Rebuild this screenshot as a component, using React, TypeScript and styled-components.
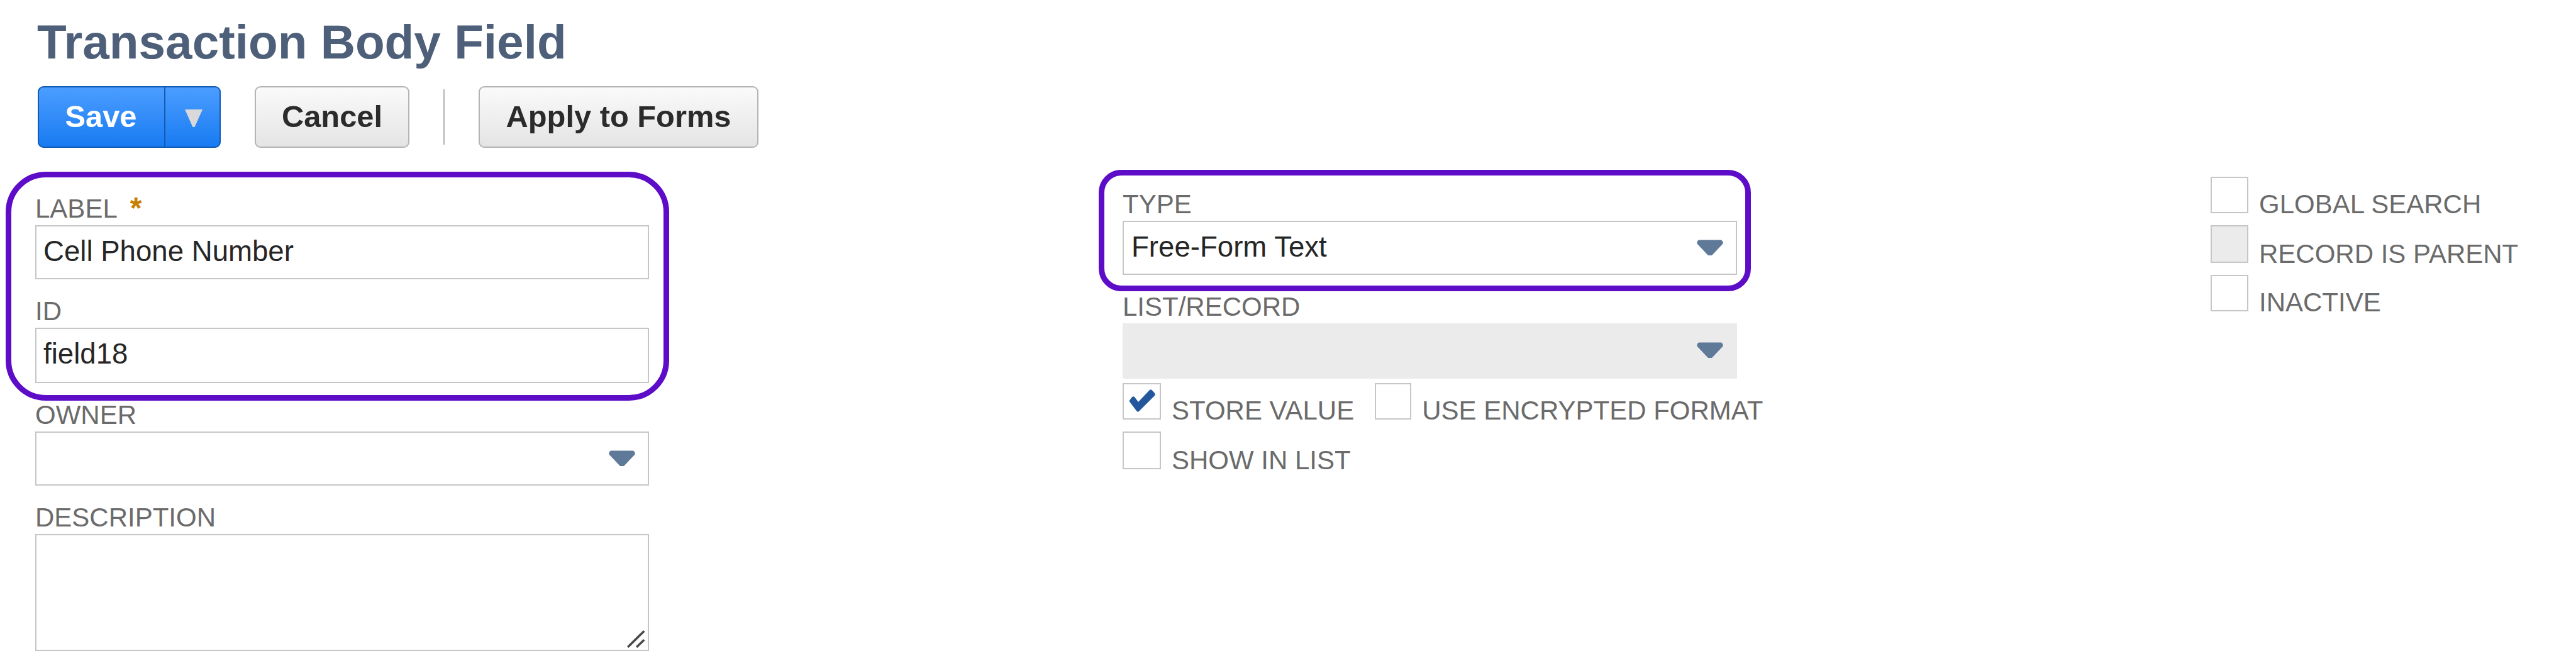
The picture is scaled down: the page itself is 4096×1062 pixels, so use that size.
import React from 'react';
import styled, { createGlobalStyle } from 'styled-components';

interface SelectFieldProps {
  label: string;
  value?: string;
  disabled?: boolean;
}

interface CheckFieldProps {
  label: string;
  checked?: boolean;
  disabled?: boolean;
  width?: number;
  height?: number;
}

const CaretIcon: React.FC = () => (
  <Caret width="42" height="26" viewBox="0 0 42 26">
    <path d="M3 0.5H39L41.5 3V6.5L24 25H18L0.5 6.5V3Z" fill="#5f7999" />
  </Caret>
);

const SelectField: React.FC<SelectFieldProps> = ({ label, value, disabled }) => (
  <Field>
    <Label>{label}</Label>
    <Select $disabled={disabled}>
      <Value>{value}</Value>
      <CaretIcon />
    </Select>
  </Field>
);

const CheckField: React.FC<CheckFieldProps> = ({ label, checked, disabled, width = 60, height = 58 }) => (
  <CheckRow>
    <CheckBox $width={width} $height={height} $disabled={disabled}>
      {checked && (
        <CheckMark width="42" height="36" viewBox="0 0 42 36">
          <path
            d="M6 12.5L1.5 18.5L13.5 34.5H15L40.5 9V7L35.5 1.5H34L15 21.5L8 12.5Z"
            fill="#23569c"
            stroke="#23569c"
            strokeWidth="2"
            strokeLinejoin="round"
          />
        </CheckMark>
      )}
    </CheckBox>
    <CheckLabel>{label}</CheckLabel>
  </CheckRow>
);

const App: React.FC = () => {
  return (
    <Page>
      <GlobalStyle />
      <Title>Transaction Body Field</Title>
      <Toolbar>
        <SplitButton>
          <SaveButton>Save</SaveButton>
          <SaveMenu>
            <svg width="28" height="28" viewBox="0 0 28 28">
              <path d="M0 0H28L15.5 28H12.5Z" fill="#d9d9d9" />
            </svg>
          </SaveMenu>
        </SplitButton>
        <Button $width={246}>Cancel</Button>
        <Separator />
        <Button $width={445}>Apply to Forms</Button>
      </Toolbar>
      <Form>
        <MainColumn>
          <Group>
            <Field>
              <Label>
                LABEL<Required>*</Required>
              </Label>
              <TextBox $height={86}>
                <Value>Cell Phone Number</Value>
              </TextBox>
            </Field>
            <Field>
              <Label>ID</Label>
              <TextBox $height={88}>
                <Value>field18</Value>
              </TextBox>
            </Field>
            <MainHighlight />
          </Group>
          <SelectField label="OWNER" />
          <Field>
            <Label>DESCRIPTION</Label>
            <TextArea>
              <svg width="29" height="28" viewBox="0 0 29 28">
                <path d="M2.5 25.5L26 2.5M16.5 25.5L26 16.5" stroke="#4a4a4a" strokeWidth="3.6" strokeLinecap="square" />
              </svg>
            </TextArea>
          </Field>
        </MainColumn>
        <TypeColumn>
          <Group>
            <SelectField label="TYPE" value="Free-Form Text" />
            <TypeHighlight />
          </Group>
          <SelectField label="LIST/RECORD" disabled />
          <Checks>
            <CheckLine>
              <CheckField label="STORE VALUE" width={61} checked />
              <CheckField label="USE ENCRYPTED FORMAT" width={58} />
            </CheckLine>
            <CheckField label="SHOW IN LIST" width={61} height={60} />
          </Checks>
        </TypeColumn>
        <OptionColumn>
          <CheckField label="GLOBAL SEARCH" />
          <CheckField label="RECORD IS PARENT" height={60} disabled />
          <CheckField label="INACTIVE" />
        </OptionColumn>
      </Form>
    </Page>
  );
};

export default App;

const GlobalStyle = createGlobalStyle`
  *, *::before, *::after {
    box-sizing: border-box;
  }

  body {
    margin: 0;
    background: #fff;
    overflow: hidden;
  }
`;

const Page = styled.div`
  width: 4096px;
  height: 1062px;
  padding: 40px 0 0 56px;
  font-family: 'Liberation Sans', Arial, sans-serif;
  white-space: nowrap;
`;

const Title = styled.h1`
  margin: 0 0 44px 3px;
  font-size: 76.5px;
  line-height: 53px;
  font-weight: bold;
  color: #4d5f79;
`;

const Toolbar = styled.div`
  display: flex;
  align-items: center;
  gap: 54px;
  height: 98px;
  margin-left: 4px;
`;

const SplitButton = styled.div`
  display: flex;
  width: 291px;
  height: 98px;
  border: 2px solid #125ab2;
  border-radius: 9px;
  background: linear-gradient(#4c9dff, #187bf2);
`;

const SaveButton = styled.div`
  display: flex;
  align-items: center;
  justify-content: center;
  width: 201px;
  padding: 0 2px 3px 0;
  border-right: 2px solid #125ab2;
  font-size: 48.8px;
  line-height: 34px;
  font-weight: bold;
  color: #fff;
`;

const SaveMenu = styled.div`
  display: flex;
  flex: 1;
  align-items: center;
  justify-content: center;
  padding: 4px 0 0 3px;
`;

const Button = styled.div<{ $width: number }>`
  display: flex;
  align-items: center;
  justify-content: center;
  width: ${({ $width }) => $width}px;
  height: 98px;
  padding-bottom: 3px;
  border: 2px solid #b4b4b4;
  border-radius: 9px;
  background: linear-gradient(#fafafa, #e4e4e4);
  font-size: 48.8px;
  line-height: 34px;
  font-weight: bold;
  color: #2b2b2b;
`;

const Separator = styled.div`
  width: 2px;
  height: 88px;
  background: #b4b4b4;
`;

const Form = styled.div`
  display: flex;
`;

const MainColumn = styled.div`
  display: flex;
  flex-direction: column;
  gap: 36px;
  width: 976px;
  margin: 82px 753px 0 0;
`;

const TypeColumn = styled.div`
  display: flex;
  flex-direction: column;
  gap: 36px;
  width: 977px;
  margin: 75px 753px 0 0;
`;

const OptionColumn = styled.div`
  display: flex;
  flex-direction: column;
  gap: 19px;
  margin-top: 46px;
`;

const Group = styled.div`
  position: relative;
  display: flex;
  flex-direction: column;
  gap: 36px;
`;

const Highlight = styled.div`
  position: absolute;
  border: 9px solid #5d0cc8;
  pointer-events: none;
`;

const MainHighlight = styled(Highlight)`
  inset: -44px -32px -28px -47px;
  border-radius: 64px;
`;

const TypeHighlight = styled(Highlight)`
  inset: -40px -22px -26px -38px;
  border-radius: 36px;
`;

const Field = styled.div`
  display: flex;
  flex-direction: column;
  gap: 12px;
`;

const Label = styled.div`
  display: flex;
  height: 29px;
  font-size: 42px;
  line-height: 29px;
  color: #6b6b6b;
`;

const Required = styled.span`
  margin-left: 20px;
  font-size: 48px;
  line-height: 28px;
  font-weight: bold;
  color: #c77f02;
`;

const TextBox = styled.div<{ $height: number }>`
  height: ${({ $height }) => $height}px;
  padding: 24px 11px 0;
  border: 2px solid #c6c6c6;
  background: #fff;
`;

const Value = styled.div`
  font-size: 45.6px;
  line-height: 32px;
  color: #262626;
`;

const Select = styled.div<{ $disabled?: boolean }>`
  display: flex;
  justify-content: space-between;
  height: ${({ $disabled }) => ($disabled ? 88 : 86)}px;
  padding: 24px 20px 0 12px;
  border: 2px solid ${({ $disabled }) => ($disabled ? '#ebebeb' : '#c6c6c6')};
  background: ${({ $disabled }) => ($disabled ? '#ebebeb' : '#fff')};
`;

const Caret = styled.svg`
  margin-top: 4px;
`;

const TextArea = styled.div`
  display: flex;
  align-items: flex-end;
  justify-content: flex-end;
  height: 186px;
  padding: 0 4px 3px 0;
  border: 2px solid #c6c6c6;
  background: #fff;
`;

const Checks = styled.div`
  display: flex;
  flex-direction: column;
  gap: 19px;
  margin-top: -29px;
`;

const CheckLine = styled.div`
  display: flex;
  gap: 33px;
`;

const CheckRow = styled.div`
  display: flex;
  align-items: flex-end;
  gap: 17px;
`;

const CheckBox = styled.div<{ $width: number; $height: number; $disabled?: boolean }>`
  display: flex;
  align-items: center;
  justify-content: center;
  width: ${({ $width }) => $width}px;
  height: ${({ $height }) => $height}px;
  border: 2px solid #c6c6c6;
  background: ${({ $disabled }) => ($disabled ? '#ebebeb' : '#fff')};
`;

const CheckMark = styled.svg`
  margin: 0 0 2px 1px;
`;

const CheckLabel = styled.div`
  font-size: 42px;
  line-height: 29px;
  color: #6b6b6b;
`;
